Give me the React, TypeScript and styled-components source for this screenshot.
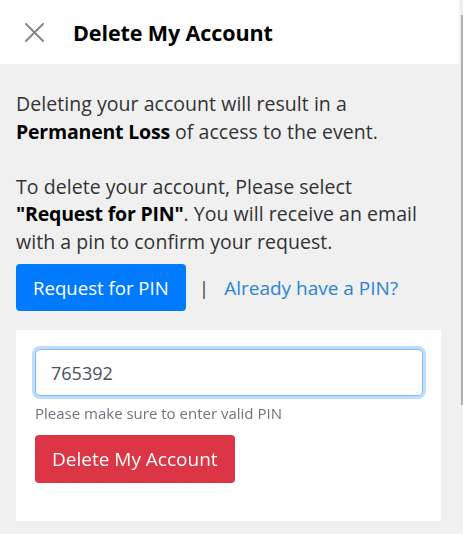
import React from "react";
import styled, { createGlobalStyle } from "styled-components";

const Global = createGlobalStyle`
  html, body { margin: 0; padding: 0; background: #f0f0f0; }
  body { font-family: "Open Sans", "Noto Sans", sans-serif; }
  * { box-sizing: border-box; }
`;

const Frame = styled.div`
  display: flex;
  width: 463px;
  height: 534px;
  overflow: hidden;
`;

const Page = styled.div`
  width: 459px;
  display: flex;
  flex-direction: column;
`;

const Track = styled.div`
  width: 4px;
  display: flex;
  justify-content: flex-end;
  padding-top: 15px;
`;

const Thumb = styled.div`
  width: 2px;
  height: 390px;
  background: #b0b0b0;
`;

const Header = styled.header`
  height: 64px;
  background: #fff;
  display: flex;
  align-items: center;
  padding-left: 25px;
  gap: 29px;
`;

const Close = styled.button`
  border: 0;
  background: none;
  padding: 0;
  width: 19px;
  height: 19px;
  display: flex;
  cursor: pointer;
`;

const Title = styled.h1`
  margin: 0;
  font-size: 21.5px;
  font-weight: 700;
  color: #000;
  letter-spacing: -0.1px;
`;

const Content = styled.main`
  padding: 26px 16px 0 16px;
`;

const Text = styled.p`
  margin: 0;
  font-size: 19.5px;
  line-height: 27.5px;
  letter-spacing: 0.05px;
  color: #333;
`;

const Strong = styled.b`
  color: #000;
  font-weight: 700;
  letter-spacing: -0.2px;
`;

const Actions = styled.div`
  display: flex;
  align-items: center;
  margin-top: 9px;
`;

const Button = styled.button<{ $variant: "primary" | "danger" }>`
  border: 0;
  border-radius: 4px;
  font-family: inherit;
  font-size: ${(p) => (p.$variant === "primary" ? "18.6px" : "19px")};
  color: #fff;
  background: ${(p) => (p.$variant === "primary" ? "#007bff" : "#dc3545")};
  height: ${(p) => (p.$variant === "primary" ? "47px" : "48px")};
  padding: 0 17px;
  cursor: pointer;
`;

const Divider = styled.span`
  font-size: 19px;
  color: #444;
  margin: 0 15px 0 13px;
`;

const LinkText = styled.a`
  font-size: 19px;
  color: #2b83d6;
  text-decoration: none;
`;

const Card = styled.section`
  background: #fff;
  margin-top: 19px;
  width: 425px;
  padding: 19px 18px 38px 19px;
`;

const Input = styled.input`
  width: 388px;
  height: 47px;
  border: 1px solid #80bdff;
  border-radius: 5px;
  box-shadow: 0 0 0 3px rgba(0, 123, 255, 0.25);
  outline: none;
  padding: 0 15px;
  font-family: inherit;
  font-size: 18px;
  color: #495057;
`;

const Help = styled.div`
  font-size: 15px;
  line-height: 20px;
  color: #6c757d;
  margin-top: 7px;
`;

const DangerWrap = styled.div`
  margin-top: 12px;
`;

export default function App() {
  return (
    <>
      <Global />
      <Frame>
        <Page>
          <Header>
            <Close aria-label="Close">
              <svg width="19" height="19" viewBox="0 0 19 19">
                <path d="M1 1L18 18M18 1L1 18" stroke="#888" strokeWidth="2" strokeLinecap="square" />
              </svg>
            </Close>
            <Title>Delete My Account</Title>
          </Header>
          <Content>
            <Text>
              Deleting your account will result in a <Strong>Permanent Loss</Strong> of access to the event.
              <br />
              <br />
              To delete your account, Please select <Strong>"Request for PIN"</Strong>. You will receive an email with a pin to confirm your request.
            </Text>
            <Actions>
              <Button $variant="primary">Request for PIN</Button>
              <Divider>|</Divider>
              <LinkText href="#">Already have a PIN?</LinkText>
            </Actions>
            <Card>
              <Input defaultValue="765392" autoFocus />
              <Help>Please make sure to enter valid PIN</Help>
              <DangerWrap>
                <Button $variant="danger">Delete My Account</Button>
              </DangerWrap>
            </Card>
          </Content>
        </Page>
        <Track>
          <Thumb />
        </Track>
      </Frame>
    </>
  );
}
